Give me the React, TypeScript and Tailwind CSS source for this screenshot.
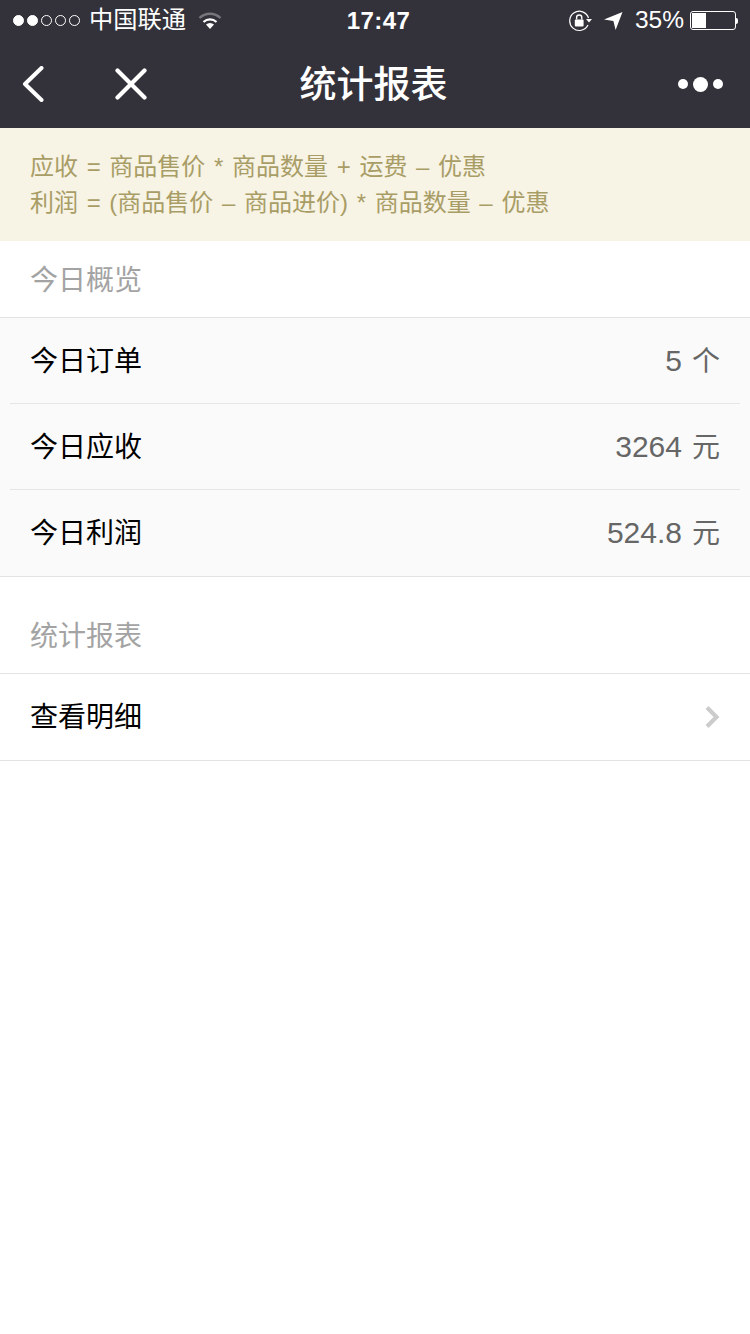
import React from "react";

const font = "font-['Liberation_Sans','Noto_Sans_CJK_SC',sans-serif]";

function SignalDots() {
  return (
    <div className="flex items-center gap-[3px]">
      {[1, 1, 0, 0, 0].map((on, i) => (
        <span
          key={i}
          className={on ? "h-[11px] w-[11px] rounded-full border border-white bg-white" : "h-[11px] w-[11px] rounded-full border border-white"}
        />
      ))}
    </div>
  );
}

function Wifi() {
  return (
    <svg width="24" height="18" viewBox="0 0 24 18" fill="none">
      <path d="M1.5 6 A15 15 0 0 1 22.5 6" stroke="#77767c" strokeWidth="2.4" />
      <path d="M5.5 10 A9.5 9.5 0 0 1 18.5 10" stroke="#fff" strokeWidth="2.2" />
      <path d="M12 17 L8 12.6 A6 6 0 0 1 16 12.6 Z" fill="#fff" />
    </svg>
  );
}

function RotationLock() {
  return (
    <svg width="24" height="22" viewBox="0 0 24 22" fill="none">
      <path d="M19.5 8 A9.6 9.6 0 1 0 19 15" stroke="#fff" strokeWidth="1.2" />
      <path d="M17 9 h6 l-3 3.4 Z" fill="#fff" />
      <rect x="5.8" y="9.5" width="8.8" height="7" rx="1" fill="#fff" />
      <path d="M7.6 9.5 V7.6 a2.6 2.6 0 0 1 5.2 0 V9.5" stroke="#fff" strokeWidth="1.4" />
    </svg>
  );
}

function Location() {
  return (
    <svg width="20" height="20" viewBox="0 0 20 20">
      <path d="M19.5 1 L12.6 19 L10.4 10 L1 8.4 Z" fill="#fff" />
    </svg>
  );
}

function Battery() {
  return (
    <div className="flex items-center">
      <div className="flex h-[19px] w-[46px] items-stretch rounded-[3px] border border-white p-[1px]">
        <div className="w-[14px] bg-white" />
      </div>
      <div className="h-[6px] w-[2px] rounded-r-sm bg-white" />
    </div>
  );
}

function StatusBar() {
  return (
    <div className="grid h-[40px] grid-cols-3 items-center pt-[1px] pr-[12px] pl-[13px] text-white">
      <div className="flex items-center">
        <SignalDots />
        <span className="ml-[9px] text-[24.25px] leading-none">中国联通</span>
        <span className="ml-[12px]">
          <Wifi />
        </span>
      </div>
      <div className="pl-[6px] text-center text-[24px] leading-none font-bold tracking-[0.4px]">17:47</div>
      <div className="flex items-center justify-end">
        <RotationLock />
        <span className="ml-[10px]">
          <Location />
        </span>
        <span className="mr-[6px] ml-[12px] text-[24.5px] leading-none">35%</span>
        <Battery />
      </div>
    </div>
  );
}

function NavBar() {
  return (
    <div className="flex h-[88px] items-center justify-between pr-[27px] pl-[22px]">
      <div className="flex w-[125px] items-center justify-between">
        <svg width="22" height="36" viewBox="0 0 22 36" fill="none">
          <path d="M19.5 2 L3 18 L19.5 34" stroke="#fff" strokeWidth="4" strokeLinecap="round" strokeLinejoin="round" />
        </svg>
        <svg width="32" height="32" viewBox="0 0 32 32" fill="none">
          <path d="M2.5 2.5 L29.5 29.5 M29.5 2.5 L2.5 29.5" stroke="#fff" strokeWidth="4.2" strokeLinecap="round" />
        </svg>
      </div>
      <div className="pt-[2px] pl-[2px] text-[37px] leading-none font-medium text-white">统计报表</div>
      <div className="flex w-[125px] items-center justify-end gap-[5px]">
        <span className="h-[10px] w-[10px] rounded-full bg-white" />
        <span className="h-[15px] w-[15px] rounded-full bg-white" />
        <span className="h-[10px] w-[10px] rounded-full bg-white" />
      </div>
    </div>
  );
}

function SectionLabel({ children, className }: { children: React.ReactNode; className: string }) {
  return <div className={className + " flex items-center px-[30px] text-[28px] text-[#a3a3a3]"}>{children}</div>;
}

function StatRow({ label, num, unit, last }: { label: string; num: string; unit: string; last?: boolean }) {
  return (
    <div className={last ? "flex h-[86px] items-center justify-between border-b border-transparent px-[20px]" : "flex h-[86px] items-center justify-between border-b border-[#e6e6e6] px-[20px]"}>
      <span className="pt-[2px] text-[28px] text-black">{label}</span>
      <span className="flex items-baseline gap-[10px] pb-[1px] text-[#666666]">
        <span className="text-[30px]">{num}</span>
        <span className="text-[28px]">{unit}</span>
      </span>
    </div>
  );
}

export default function App() {
  return (
    <div className={font + " min-h-[1334px] w-[750px] bg-white"}>
      <div className="bg-[#33323a]">
        <StatusBar />
        <NavBar />
      </div>

      <div className="h-[113px] bg-[#f7f3e5] px-[30px] pt-[21px] text-[24px] leading-[36px] [word-spacing:2px] text-[#a99d66]">
        <div>应收 = 商品售价 * 商品数量 + 运费 – 优惠</div>
        <div>利润 = (商品售价 – 商品进价) * 商品数量 – 优惠</div>
      </div>

      <SectionLabel className="h-[76px] pt-[3px]">今日概览</SectionLabel>
      <div className="border-y border-[#e3e3e3] bg-[#fafafa] px-[10px]">
        <StatRow label="今日订单" num="5" unit="个" />
        <StatRow label="今日应收" num="3264" unit="元" />
        <StatRow label="今日利润" num="524.8" unit="元" last />
      </div>

      <SectionLabel className="h-[96px] pt-[23px]">统计报表</SectionLabel>
      <div className="flex h-[88px] items-center justify-between border-y border-[#e3e3e3] pr-[30px] pl-[30px]">
        <span className="pt-[1px] text-[28px] text-black">查看明细</span>
        <svg width="16" height="24" viewBox="0 0 16 24" fill="none">
          <path d="M3 2.5 L12.5 12 L3 21.5" stroke="#cccccc" strokeWidth="4.2" />
        </svg>
      </div>
    </div>
  );
}
